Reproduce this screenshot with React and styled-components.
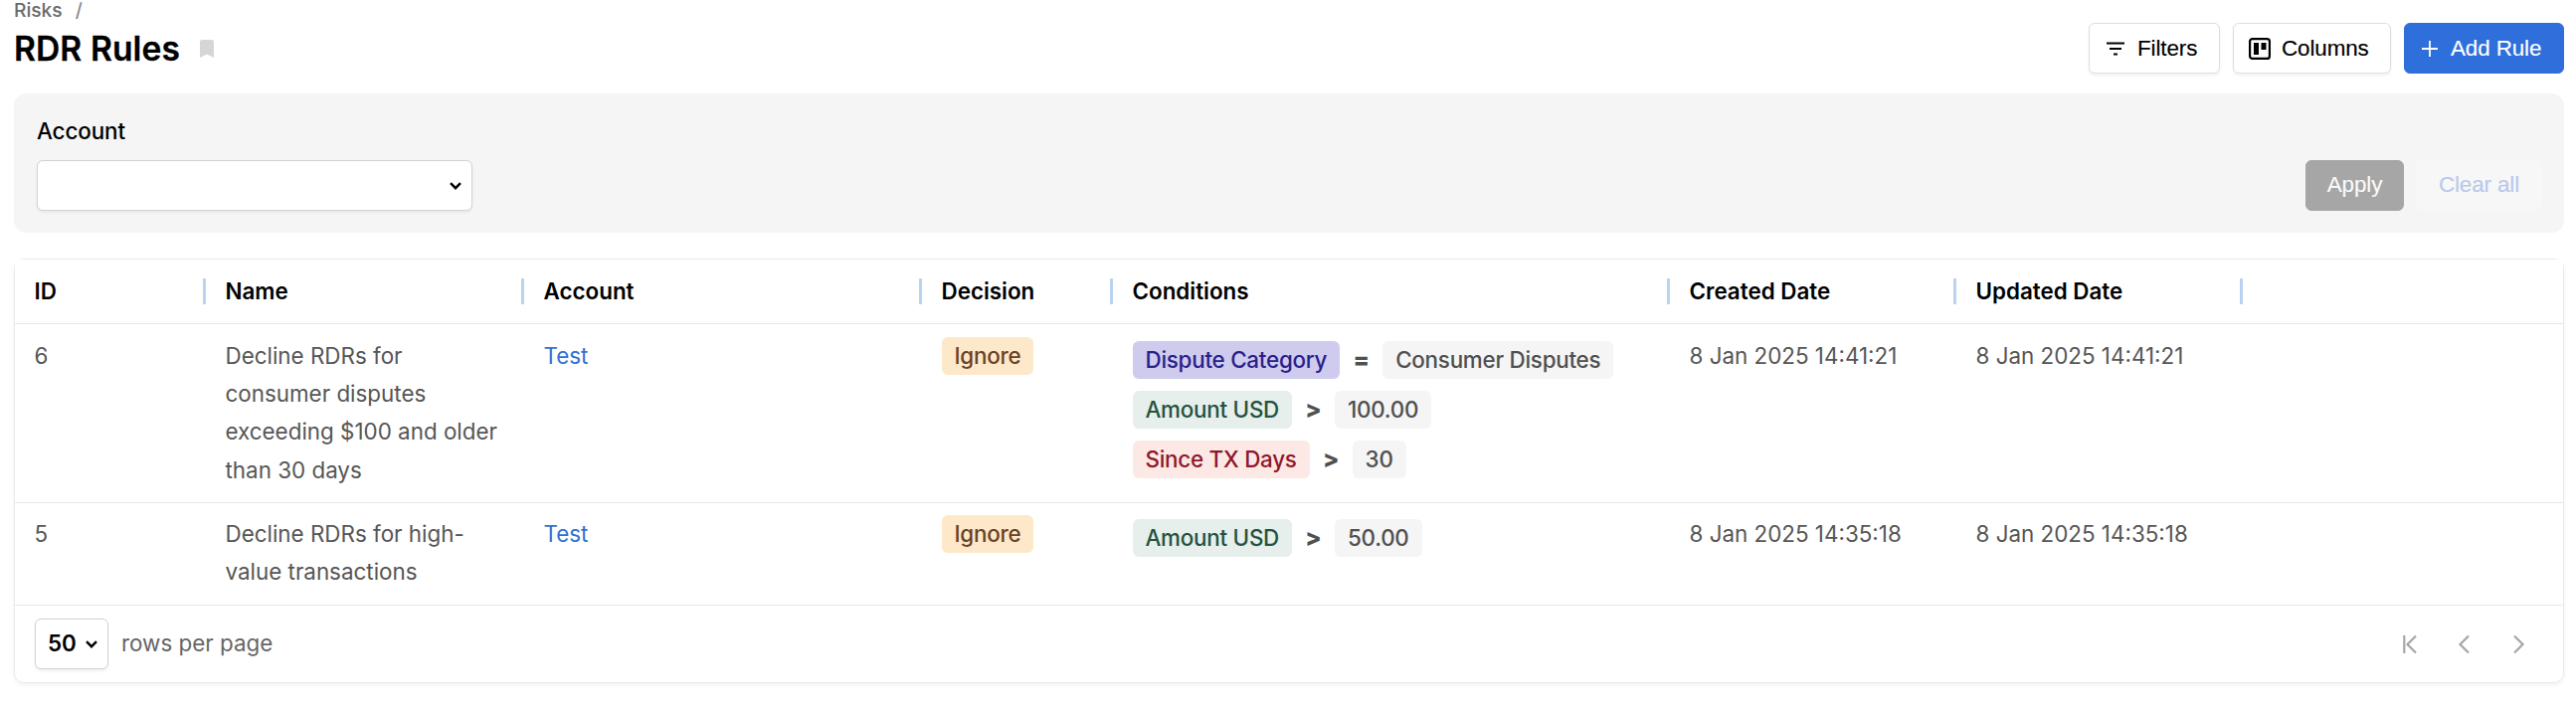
import React from 'react'
import styled, { createGlobalStyle } from 'styled-components'

const GlobalStyle = createGlobalStyle`
* {
  box-sizing: border-box;
}
body {
  margin: 0;
  background: #fff;
  color: #565656;
  font-family: Inter, "Liberation Sans", sans-serif;
  font-size: 22.4px;
  line-height: 38.2px;
}
button {
  margin: 0;
  cursor: pointer;
}
`

const Page = styled.main`
width: 2590px;
height: 716px;
padding: 0 12px 0 14px;
overflow: hidden;
`

const Header = styled.header`
display: flex;
justify-content: space-between;
height: 94px;
`

const Crumbs = styled.nav`
display: flex;
gap: 13px;
height: 20px;
line-height: 20px;
font-size: 19.2px;
font-weight: 500;
color: #6b6b6b;
`

const Slash = styled.span`
color: #8a8a8a;
`

const TitleRow = styled.div`
display: flex;
align-items: center;
height: 58px;
gap: 20px;
`

const Title = styled.h1`
margin: 0;
font-size: 33.6px;
font-weight: 600;
line-height: 40px;
letter-spacing: 0.1px;
color: #000;
-webkit-text-stroke: 0.3px #000;
`

const Actions = styled.div`
display: flex;
gap: 13px;
padding-top: 23px;
`

const Button = styled.button`
display: flex;
align-items: center;
justify-content: ${props => props.$icon ? 'flex-start' : 'center'};
width: ${props => props.$w}px;
height: 51px;
padding: 0 0 ${props => props.$icon ? 0 : 2}px ${props => props.$icon || 0}px;
gap: ${props => props.$gap || 0}px;
border: 1px solid ${props => props.$border || '#dedede'};
border-radius: 6px;
background: ${props => props.$bg || '#fff'};
box-shadow: ${props => props.$flat ? 'none' : '0 2px 3px rgba(0, 0, 0, 0.06)'};
color: ${props => props.$color || '#000'};
font-family: "Liberation Sans", Arial, sans-serif;
font-size: 22.4px;
letter-spacing: -0.1px;
-webkit-text-stroke: 0.15px currentColor;
`

const FilterPanel = styled.section`
display: flex;
justify-content: space-between;
align-items: flex-end;
height: 140px;
padding: 0 22px 22px 23px;
border-radius: 12px;
background: #f5f5f5;
`

const Field = styled.label`
display: flex;
flex-direction: column;
gap: 10px;
color: #000;
font-weight: 500;
letter-spacing: -0.1px;
`

const Select = styled.div`
display: flex;
align-items: center;
justify-content: space-between;
width: ${props => props.$w}px;
height: 51px;
padding: 0 10px 0 12px;
border: 1px solid #d2d2d2;
border-radius: 6px;
background: #fff;
box-shadow: 0 2px 3px rgba(0, 0, 0, 0.06);
color: #000;
font-weight: 600;
`

const PanelActions = styled.div`
display: flex;
gap: 12px;
`

const TableCard = styled.section`
height: 427px;
margin-top: 26px;
border: 1px solid #ebebeb;
border-radius: 10px;
box-shadow: 0 2px 4px rgba(0, 0, 0, 0.06);
`

const Row = styled.div`
display: grid;
grid-template-columns: 192px 320px 400px 192px 560px 288px 288px 1fr;
height: ${props => props.$h}px;
border-bottom: 1px solid #e8e8e8;
background: ${props => props.$head ? '#fff' : 'transparent'};
`

const HeadCell = styled.div`
display: flex;
align-items: center;
justify-content: space-between;
padding-left: 19.5px;
color: #000;
font-weight: 600;
`

const Divider = styled.span`
width: 3px;
height: 26px;
background: #b9d4f0;
`

const Cell = styled.div`
padding: ${props => props.$top}px 20px 0 19.5px;
`

const AccountLink = styled.a`
color: #3470d2;
`

const tones = {
  warning: ['#fde9c9', '#6b4226'],
  purple: ['#cfcbee', '#29218a'],
  green: ['#e6efec', '#25533f'],
  red: ['#fce9e5', '#8f172c'],
  plain: ['#f5f5f5', '#505050'],
}

const Tag = styled.span`
display: inline-block;
height: 38px;
padding: 0 13px;
border-radius: 6px;
background: ${props => tones[props.$tone][0]};
color: ${props => tones[props.$tone][1]};
font-weight: 500;
letter-spacing: -0.25px;
line-height: 38px;
white-space: nowrap;
`

const Conditions = styled.div`
display: flex;
flex-direction: column;
gap: 12px;
padding-top: 4px;
`

const Condition = styled.div`
display: flex;
height: 38px;
`

const Operator = styled.span`
width: 43px;
text-align: center;
font-size: 24px;
font-weight: 800;
line-height: 38px;
color: #505050;
`

const Footer = styled.footer`
display: flex;
align-items: center;
justify-content: space-between;
height: 77px;
padding: 0 33px 0 20px;
color: #666;
`

const PageSize = styled.div`
display: flex;
align-items: center;
gap: 13px;
`

const Pager = styled.div`
display: flex;
gap: 31px;
`

const Chevron = () => (
  <svg width="12" height="8" viewBox="0 0 12 8" fill="none" stroke="#000" strokeWidth="2.4">
    <path d="M1 1.2 6 6.2 11 1.2" />
  </svg>
)

const PageIcon = ({ d }) => (
  <svg width="24" height="24" viewBox="0 0 24 24" fill="none" stroke="#a6a6a6" strokeWidth="2.2">
    <path d={d} />
  </svg>
)

const columns = ['ID', 'Name', 'Account', 'Decision', 'Conditions', 'Created Date', 'Updated Date']

const rules = [
  {
    id: 6,
    height: 180,
    top: 13,
    name: 'Decline RDRs for consumer disputes exceeding $100 and older than 30 days',
    date: '8 Jan 2025 14:41:21',
    conditions: [
      ['purple', 'Dispute Category', '=', 'Consumer Disputes'],
      ['green', 'Amount USD', '>', '100.00'],
      ['red', 'Since TX Days', '>', '30'],
    ],
  },
  {
    id: 5,
    height: 103,
    top: 12,
    name: 'Decline RDRs for high-value transactions',
    date: '8 Jan 2025 14:35:18',
    conditions: [['green', 'Amount USD', '>', '50.00']],
  },
]

const App = () => {
  return (
    <Page>
      <GlobalStyle />

      <Header>
        <div>
          <Crumbs>
            <span>Risks</span>
            <Slash>/</Slash>
          </Crumbs>
          <TitleRow>
            <Title>RDR Rules</Title>
            <svg width="14" height="18" viewBox="0 0 14 18" fill="#d6d6d6">
              <path d="M2 0h10a2 2 0 0 1 2 2v16l-7-3.6L0 18V2a2 2 0 0 1 2-2z" />
            </svg>
          </TitleRow>
        </div>

        <Actions>
          <Button $w={132} $icon={17} $gap={13}>
            <svg width="18" height="14" viewBox="0 0 18 14" stroke="#000" strokeWidth="2">
              <path d="M0 1.5h18M3 7h12M7 12.5h4" />
            </svg>
            Filters
          </Button>
          <Button $w={159} $icon={15} $gap={11}>
            <svg width="22" height="22" viewBox="0 0 22 22" fill="none" stroke="#000" strokeWidth="2.2">
              <rect x="1.1" y="1.1" width="19.8" height="19.8" rx="2.5" />
              <path d="M5 5h5v12H5zM12.5 5h5v7h-5z" fill="#000" stroke="none" />
            </svg>
            Columns
          </Button>
          <Button $w={161} $icon={17} $gap={13} $bg="#2f6fdb" $border="#2f6fdb" $color="#fff" $flat>
            <svg width="16" height="16" viewBox="0 0 16 16" stroke="#fff" strokeWidth="1.8">
              <path d="M8 0v16M0 8h16" />
            </svg>
            Add Rule
          </Button>
        </Actions>
      </Header>

      <FilterPanel>
        <Field>
          Account
          <Select $w={438}>
            <span />
            <Chevron />
          </Select>
        </Field>
        <PanelActions>
          <Button $w={99} $bg="#a6a6a6" $border="#a6a6a6" $color="#fafafa" $flat>Apply</Button>
          <Button $w={127} $bg="#f7f7f7" $border="#f7f7f7" $color="#b8caeb" $flat>Clear all</Button>
        </PanelActions>
      </FilterPanel>

      <TableCard>
        <Row $h={65} $head>
          {columns.map(column => (
            <HeadCell key={column}>
              {column}
              <Divider />
            </HeadCell>
          ))}
        </Row>

        {rules.map(rule => (
          <Row key={rule.id} $h={rule.height}>
            <Cell $top={rule.top}>{rule.id}</Cell>
            <Cell $top={rule.top}>{rule.name}</Cell>
            <Cell $top={rule.top}><AccountLink>Test</AccountLink></Cell>
            <Cell $top={rule.top}><Tag $tone="warning">Ignore</Tag></Cell>
            <Cell $top={rule.top}>
              <Conditions>
                {rule.conditions.map(([tone, field, operator, value]) => (
                  <Condition key={field}>
                    <Tag $tone={tone}>{field}</Tag>
                    <Operator>{operator}</Operator>
                    <Tag $tone="plain">{value}</Tag>
                  </Condition>
                ))}
              </Conditions>
            </Cell>
            <Cell $top={rule.top}>{rule.date}</Cell>
            <Cell $top={rule.top}>{rule.date}</Cell>
          </Row>
        ))}

        <Footer>
          <PageSize>
            <Select $w={74}>
              50
              <Chevron />
            </Select>
            rows per page
          </PageSize>
          <Pager>
            <PageIcon d="M7.3 3v18M19 3.5l-8.5 8.5 8.5 8.5" />
            <PageIcon d="M17 3.5l-8.5 8.5 8.5 8.5" />
            <PageIcon d="M8 3.5l8.5 8.5-8.5 8.5" />
          </Pager>
        </Footer>
      </TableCard>
    </Page>
  )
}

export default App
